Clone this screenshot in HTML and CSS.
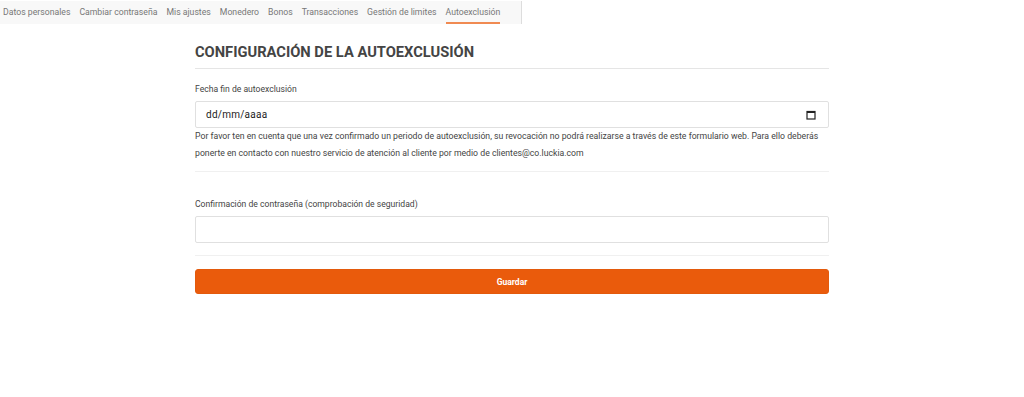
FILE: index.html
```html
<!DOCTYPE HTML>
<html>

<head>
    <meta charset="utf-8">
    <link rel="stylesheet" href="styles.css">
</head>

<body>

    <div class="topbar">
        <div class="tabs">
            <a class="tab">Datos personales</a>
            <a class="tab">Cambiar contraseña</a>
            <a class="tab">Mis ajustes</a>
            <a class="tab">Monedero</a>
            <a class="tab">Bonos</a>
            <a class="tab">Transacciones</a>
            <a class="tab">Gestión de limites</a>
            <a class="tab active">Autoexclusión</a>
        </div>
    </div>

    <div class="panel">
        <h2 class="title">CONFIGURACIÓN DE LA AUTOEXCLUSIÓN</h2>

        <div class="group">
            <label class="label">Fecha fin de autoexclusión</label>
            <div class="field date">
                <span>dd/mm/aaaa</span>
                <svg width="10" height="10" viewBox="0 0 10 10">
                    <rect x="1" y="1.5" width="8" height="7.5" fill="none" stroke="#222" stroke-width="1.2"/>
                    <rect x="1" y="1" width="8" height="2" fill="#222"/>
                </svg>
            </div>
            <p class="help">Por favor ten en cuenta que una vez confirmado un periodo de autoexclusión, su revocación no podrá realizarse a través de este formulario web. Para ello deberás ponerte en contacto con nuestro servicio de atención al cliente por medio de clientes@co.luckia.com</p>
        </div>

        <div class="group second">
            <label class="label">Confirmación de contraseña (comprobación de seguridad)</label>
            <div class="field"></div>
        </div>

        <button class="save">Guardar</button>
    </div>

</body>

</html>
```

FILE: styles.css
```css
body {
    margin: 0;
    font-family: Roboto, "Liberation Sans", sans-serif;
    background: #ffffff;
    color: #444444;
}

.topbar {
    height: 23px;
}

.tabs {
    display: inline-flex;
    height: 23px;
    width: 522px;
    background-color: #f8f8f8;
    border-right: 1px solid #dddddd;
    box-sizing: border-box;
    padding-left: 3px;
    white-space: nowrap;
}

.tab {
    flex-shrink: 0;
    font-size: 8.7px;
    color: #777777;
    line-height: 23px;
    margin-right: 9px;
    border-bottom: 2px solid transparent;
    height: 21px;
}

.tab.active {
    border-bottom-color: #f08a52;
}

.panel {
    width: 634px;
    margin: 0 auto;
    padding-top: 20px;
}

.title {
    margin: 0;
    font-size: 14.7px;
    font-weight: bold;
    color: #444444;
    line-height: 18px;
    padding-bottom: 7px;
    border-bottom: 1px solid #e5e5e5;
}

.group {
    padding-top: 14px;
    padding-bottom: 9px;
    border-bottom: 1px solid #f0f0f0;
}

.group.second {
    padding-top: 26px;
    padding-bottom: 12px;
}

.label {
    display: block;
    font-size: 8.6px;
    color: #444444;
    line-height: 12px;
    margin-bottom: 6px;
}

.field {
    height: 25px;
    border: 1px solid #e0e0e0;
    border-radius: 2px;
}

.date {
    display: flex;
    align-items: center;
    justify-content: space-between;
    padding: 0 12px 0 10px;
    font-size: 10px;
    color: #222222;
    letter-spacing: 0.25px;
}

.help {
    margin: 0;
    font-size: 8.7px;
    line-height: 17px;
    color: #444444;
}

.save {
    display: block;
    width: 100%;
    height: 25px;
    margin-top: 13px;
    border: 1px solid #e35a0c;
    border-radius: 3px;
    background-color: #ea5b0c;
    color: #ffffff;
    font-family: Roboto, "Liberation Sans", sans-serif;
    font-size: 8.5px;
    font-weight: bold;
}
```
